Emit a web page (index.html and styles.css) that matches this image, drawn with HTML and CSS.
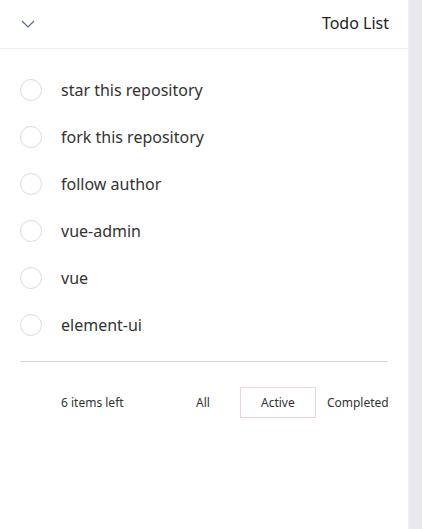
FILE: index.html
```html
<!DOCTYPE html>
<html>
<head>
<meta charset="utf-8">
<link rel="stylesheet" href="styles.css">
</head>
<body>
<div class="page">
  <section class="todo">
    <header class="todo-header">
      <svg class="chevron" width="14" height="8" viewBox="0 0 14 8"><path d="M1 1 L7 7 L13 1" fill="none" stroke="#5a6a80" stroke-width="1.2"/></svg>
      <span class="title">Todo List</span>
    </header>
    <ul class="items">
      <li class="item"><span class="check"></span><span class="label">star this repository</span></li>
      <li class="item"><span class="check"></span><span class="label">fork this repository</span></li>
      <li class="item"><span class="check"></span><span class="label">follow author</span></li>
      <li class="item"><span class="check"></span><span class="label">vue-admin</span></li>
      <li class="item"><span class="check"></span><span class="label">vue</span></li>
      <li class="item"><span class="check"></span><span class="label">element-ui</span></li>
    </ul>
    <footer class="footer">
      <span class="count">6 items left</span>
      <ul class="filters">
        <li class="filter f-all">All</li>
        <li class="filter f-active selected">Active</li>
        <li class="filter f-completed">Completed</li>
      </ul>
    </footer>
  </section>
  <div class="rail"></div>
</div>
</body>
</html>
```
FILE: styles.css
```css
* { box-sizing: border-box; }
html, body { margin: 0; padding: 0; }
body {
  font-family: "Noto Sans", "Open Sans", sans-serif;
  color: #333;
  background: #fff;
}
.page {
  display: flex;
  width: 422px;
  height: 529px;
}
.todo {
  width: 409px;
  flex: none;
  background: #fff;
  border-right: 1px solid #f0f0f3;
}
.rail {
  flex: 1;
  background: #e8e8ed;
}
.todo-header {
  height: 49px;
  display: flex;
  align-items: center;
  justify-content: space-between;
  padding: 0 19px 2px 20px;
  border-bottom: 1px solid #eceff5;
}
.chevron { margin-left: 1px; margin-top: 2px; }
.title {
  font-size: 16px;
  color: #222;
}
.items {
  list-style: none;
  margin: 0;
  padding: 17px 0 0 0;
}
.item {
  height: 47px;
  display: flex;
  align-items: center;
  padding-left: 20px;
}
.check {
  width: 22px;
  height: 22px;
  border: 1px solid #dcdcdc;
  border-radius: 50%;
  flex: none;
}
.label {
  margin-left: 19px;
  font-size: 16px;
  color: #333;
}
.footer {
  margin: 13px 20px 0 20px;
  border-top: 1px solid #d4d4d4;
  display: flex;
  align-items: center;
  padding-top: 25px;
}
.count {
  flex: none;
  margin-left: 41px;
  font-size: 12px;
  color: #333;
  width: 124px;
}
.filters {
  flex: none;
  list-style: none;
  margin: 0;
  padding: 0;
  display: flex;
  align-items: center;
}
.filter {
  flex: none;
  font-size: 12px;
  color: #333;
  height: 31px;
  display: flex;
  align-items: center;
  border: 1px solid transparent;
}
.f-all { margin-left: 10px; }
.f-active {
  margin-left: 29px;
  width: 76px;
  justify-content: center;
}
.selected { border-color: rgba(175, 47, 47, 0.2); }
.f-completed { margin-left: 10px; }
```
